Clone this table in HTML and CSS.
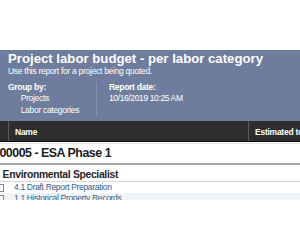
FILE: index.html
```html
<!DOCTYPE html>
<html lang="en">
<head>
<meta charset="utf-8">
<title>Project labor budget - per labor category</title>
<link rel="stylesheet" href="styles.css">
</head>
<body>
<div class="frame">
  <header class="report-header">
    <h1 class="report-title">Project labor budget - per labor category</h1>
    <p class="report-desc">Use this report for a project being quoted.</p>
    <div class="meta">
      <div class="meta-col meta-group">
        <div class="meta-label">Group by:</div>
        <div class="meta-item">Projects</div>
        <div class="meta-item">Labor categories</div>
      </div>
      <div class="meta-col meta-date">
        <div class="meta-label">Report date:</div>
        <div class="meta-value">10/16/2019 10:25 AM</div>
      </div>
    </div>
  </header>

  <div class="col-head">
    <div class="col col-check"></div>
    <div class="col col-name">Name</div>
    <div class="col col-est">Estimated total</div>
  </div>

  <div class="grid-body">
    <div class="project-row">00005 - ESA Phase 1</div>
    <div class="category-row">Environmental Specialist</div>
    <div class="task-row">
      <span class="check"></span>
      <a class="task-link" href="#">4.1 Draft Report Preparation</a>
    </div>
    <div class="task-row task-row-alt">
      <span class="check"></span>
      <a class="task-link" href="#">1.1 Historical Property Records</a>
    </div>
  </div>
</div>
</body>
</html>
```

FILE: styles.css
```css
html, body {
  margin: 0;
  padding: 0;
  background: #ffffff;
}

body {
  font-family: "Liberation Sans", Arial, sans-serif;
  width: 300px;
  height: 250px;
  overflow: hidden;
}

/* report viewport, letterboxed inside the window */
.frame {
  margin-top: 50px;
  height: 150px;
  overflow: hidden;
  background: #ffffff;
}

/* ---- header panel ---- */
.report-header {
  background: #6e7d9d;
  color: #ffffff;
  padding: 1px 8px 4px;
  height: 66px;
}

.report-title {
  margin: 0;
  font-size: 13.2px;
  line-height: 15px;
  font-weight: bold;
  white-space: nowrap;
}

.report-desc {
  margin: 0;
  font-size: 8.5px;
  line-height: 10px;
  letter-spacing: -0.29px;
  white-space: nowrap;
}

.meta {
  display: flex;
  margin-top: 6.2px;
  font-size: 8.5px;
  line-height: 11.3px;
  letter-spacing: -0.3px;
}

.meta-col {
  white-space: nowrap;
}

.meta-group {
  width: 88px;
  border-right: 1px solid rgba(255, 255, 255, 0.16);
}

.meta-date {
  padding-left: 12px;
}

.meta-label {
  font-weight: bold;
}

.meta-item {
  padding-left: 12.7px;
}

.meta-value {
  letter-spacing: -0.38px;
}

/* ---- column header bar ---- */
.col-head {
  display: flex;
  height: 20px;
  background: #2d2d2d;
  border-bottom: 1px solid #0d0d0d;
  color: #ffffff;
  font-size: 8.5px;
  letter-spacing: -0.25px;
  font-weight: bold;
}

.col {
  padding-top: 2px;
  line-height: 18px;
  box-sizing: border-box;
  height: 20px;
  white-space: nowrap;
  overflow: hidden;
}

.col-check {
  width: 9px;
  border-right: 1px solid #575757;
}

.col-name {
  width: 240px;
  padding-left: 6px;
  border-right: 1px solid #575757;
}

.col-est {
  flex: 1;
  padding-left: 6px;
}

/* ---- grid rows ---- */
.grid-body {
  padding-top: 1px;
}

.project-row {
  border-top: 1px solid #e6e6e6;
  border-bottom: 2px solid #a9a9a9;
  height: 19px;
  line-height: 19px;
  font-size: 12.4px;
  font-weight: bold;
  letter-spacing: -0.48px;
  color: #1c1c1c;
  white-space: nowrap;
  margin-left: -0.6px;
}

.category-row {
  height: 17px;
  box-sizing: border-box;
  padding: 3.3px 0 0 2.6px;
  line-height: 13.7px;
  font-size: 10.4px;
  font-weight: bold;
  letter-spacing: -0.34px;
  color: #262626;
  border-bottom: 1px solid #d6d6d6;
  white-space: nowrap;
}

.task-row {
  display: flex;
  align-items: center;
  height: 11px;
  font-size: 8.5px;
  line-height: 11px;
  white-space: nowrap;
  background: #ffffff;
}

.task-row-alt {
  background: #f1f4f7;
}

.check {
  flex: none;
  width: 5px;
  height: 6px;
  margin-left: -3px;
  border: 1px solid #8a8a8a;
  background: #fbfbfb;
}

.task-link {
  margin-left: 10px;
  color: #2f5d8e;
  text-decoration: none;
  letter-spacing: -0.33px;
}
```
